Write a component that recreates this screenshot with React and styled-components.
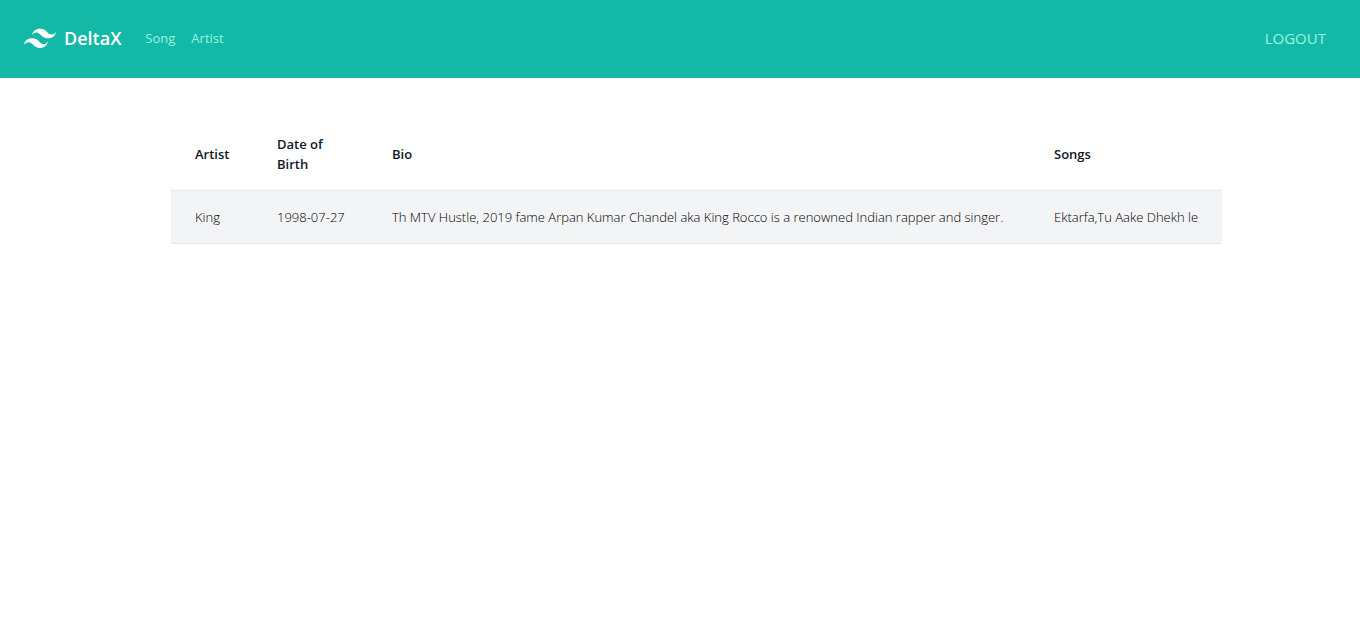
import React from "react";
import styled, { createGlobalStyle } from "styled-components";

const GlobalStyle = createGlobalStyle`
  *, *::before, *::after { box-sizing: border-box; }
  body {
    margin: 0;
    background: #fff;
    color: #111827;
    font-family: "Open Sans", "Noto Sans", sans-serif;
    font-size: 13px;
    line-height: 20px;
  }
`;

const Navbar = styled.nav`
  display: flex;
  align-items: center;
  min-height: 78px;
  padding: 0 34px 2px 24px;
  background: #14b8a6;
`;

const Brand = styled.div`
  display: flex;
  align-items: center;
  gap: 8px;
  margin-right: 24px;
  color: #fff;
`;

const BrandName = styled.span`
  font-size: 18px;
  font-weight: 600;
  line-height: 28px;
`;

const NavLinks = styled.div`
  display: flex;
  flex: 1;
  gap: 16px;
`;

const NavLink = styled.a`
  color: #99f6e4;
  text-decoration: none;
  &:hover { color: #fff; }
`;

const LogoutButton = styled.button`
  padding: 0;
  border: 0;
  background: none;
  color: #99f6e4;
  font-family: inherit;
  font-size: 15px;
  line-height: 24px;
  cursor: pointer;
  &:hover { color: #fff; }
`;

const Main = styled.main`
  display: flex;
  justify-content: center;
  padding: 40px 0 0 33px;
`;

const ArtistTable = styled.table`
  width: 100%;
  max-width: 1051px;
  border-spacing: 0;
  table-layout: fixed;
  text-align: left;
`;

const Column = styled.col`
  width: ${({ $width }) => $width};
`;

const HeaderCell = styled.th`
  padding: 16px 24px;
  font-weight: 600;
`;

const BodyRow = styled.tr`
  background: #f3f4f6;
`;

const Cell = styled.td`
  padding: 16px 24px;
  border: solid #e5e7eb;
  border-width: 1px 0;
  color: #000;
  font-weight: 300;
  white-space: nowrap;
`;

const columns = [
  { title: "Artist", width: "82px" },
  { title: "Date of Birth", width: "115px" },
  { title: "Bio", width: "auto" },
  { title: "Songs", width: "192px" },
];

const artists = [
  {
    name: "King",
    born: "1998-07-27",
    bio: "Th MTV Hustle, 2019 fame Arpan Kumar Chandel aka King Rocco is a renowned Indian rapper and singer.",
    songs: ["Ektarfa", "Tu Aake Dhekh le"],
  },
];

function Logo() {
  return (
    <svg width="32" height="32" viewBox="0 0 54 54" fill="currentColor" aria-hidden="true">
      <path d="M13.5 22.1c1.8-7.2 6.3-10.8 13.5-10.8 10.8 0 12.15 8.1 17.55 9.45 3.6.9 6.75-.45 9.45-4.05-1.8 7.2-6.3 10.8-13.5 10.8-10.8 0-12.15-8.1-17.55-9.45-3.6-.9-6.75.45-9.45 4.05zM0 38.3c1.8-7.2 6.3-10.8 13.5-10.8 10.8 0 12.15 8.1 17.55 9.45 3.6.9 6.75-.45 9.45-4.05-1.8 7.2-6.3 10.8-13.5 10.8-10.8 0-12.15-8.1-17.55-9.45-3.6-.9-6.75.45-9.45 4.05z" />
    </svg>
  );
}

export default function App() {
  return (
    <>
      <GlobalStyle />
      <Navbar>
        <Brand>
          <Logo />
          <BrandName>DeltaX</BrandName>
        </Brand>
        <NavLinks>
          <NavLink href="#song">Song</NavLink>
          <NavLink href="#artist">Artist</NavLink>
        </NavLinks>
        <LogoutButton type="button">LOGOUT</LogoutButton>
      </Navbar>
      <Main>
        <ArtistTable>
          <colgroup>
            {columns.map(({ title, width }) => (
              <Column key={title} $width={width} />
            ))}
          </colgroup>
          <thead>
            <tr>
              {columns.map(({ title }) => (
                <HeaderCell key={title} scope="col">{title}</HeaderCell>
              ))}
            </tr>
          </thead>
          <tbody>
            {artists.map((artist) => (
              <BodyRow key={artist.name}>
                <Cell>{artist.name}</Cell>
                <Cell>{artist.born}</Cell>
                <Cell>{artist.bio}</Cell>
                <Cell>{artist.songs.join(",")}</Cell>
              </BodyRow>
            ))}
          </tbody>
        </ArtistTable>
      </Main>
    </>
  );
}
